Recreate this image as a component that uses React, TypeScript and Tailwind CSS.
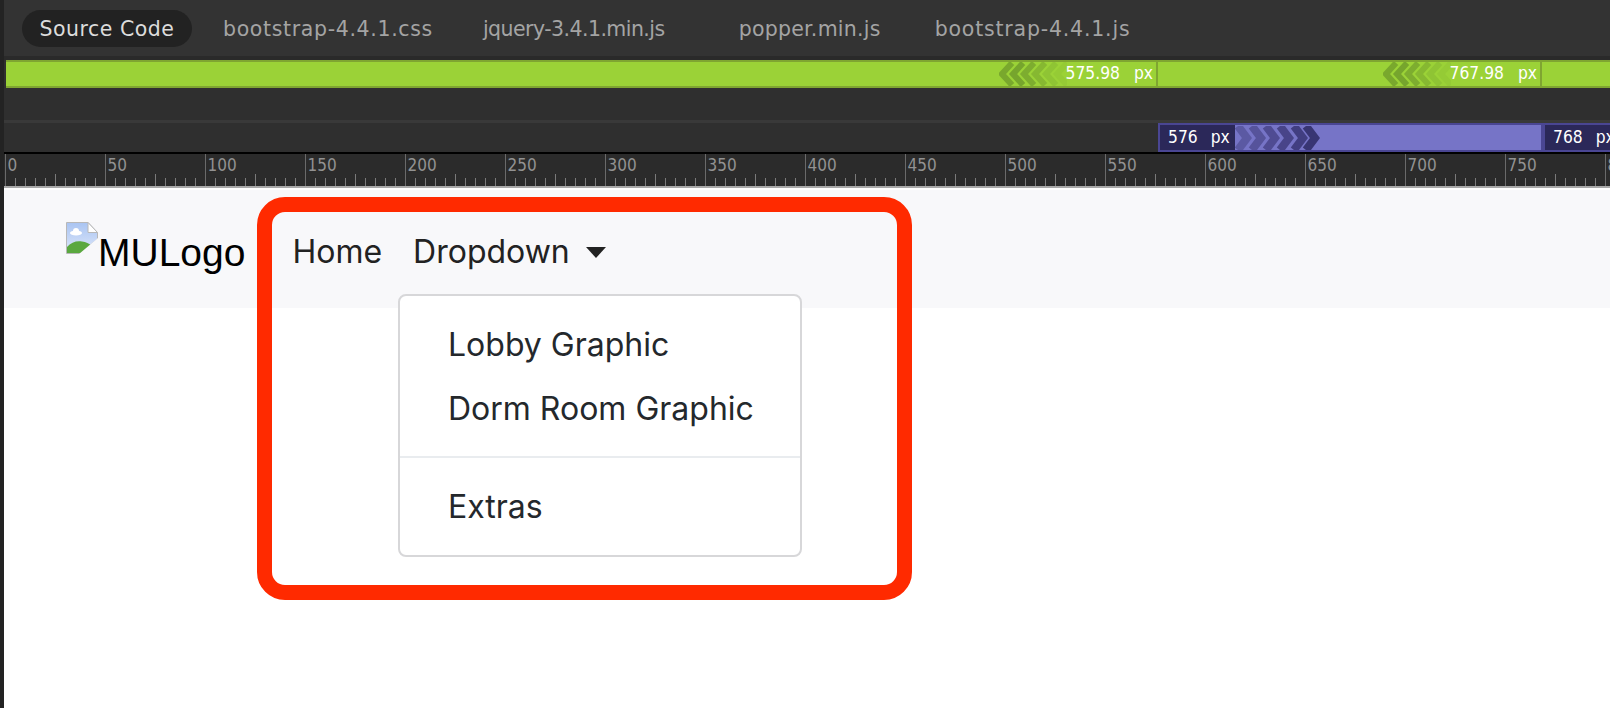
const ticks = Array.from({ length: 161 }, (_, i) => i * 5);

function Ruler() {
  return (
    <svg width="1606" height="32" className="block">
      {ticks.map((t) => {
        const x = 1.5 + t * 2;
        const top = t % 50 === 0 ? 0 : t % 25 === 0 ? 20 : 24;
        return <line key={t} x1={x} x2={x} y1={top} y2={32} stroke={t % 50 === 0 ? "#6a6a6a" : "#7a7a7a"} strokeWidth="1" />;
      })}
      {ticks
        .filter((t) => t % 50 === 0)
        .map((t) => (
          <text key={t} x={3.5 + t * 2} y={17} fill="#929292" fontSize="17" style={{ fontFamily: "'DejaVu Sans', sans-serif", fontStretch: "condensed" }}>
            {t}
          </text>
        ))}
    </svg>
  );
}

function LeftChevrons() {
  const xs = [0, 11, 22, 33, 44, 55];
  return (
    <svg width="68" height="24" className="-mr-[2px] block shrink-0">
      {xs.map((x, i) => (
        <polyline key={x} points={`${x + 13},1 ${x + 3},12 ${x + 13},23`} fill="none" stroke="#6d9a2b" strokeWidth="6" opacity={[0.75, 0.8, 0.65, 0.45, 0.25, 0.12][i]} />
      ))}
    </svg>
  );
}

function RightChevrons() {
  const xs = [0, 14, 28, 42, 56, 68];
  return (
    <svg width="86" height="24" className="block shrink-0">
      {xs.map((x, i) => (
        <polyline key={x} points={`${x + 3},0 ${x + 12},12 ${x + 3},24`} fill="none" stroke="#35316f" strokeWidth="8" opacity={[0.4, 0.5, 0.6, 0.7, 0.8, 0.95][i]} />
      ))}
    </svg>
  );
}

function BrokenImage() {
  return (
    <svg width="32" height="32" viewBox="0 0 32 32" className="block shrink-0">
      <defs>
        <linearGradient id="sky" x1="0" y1="0" x2="0" y2="1">
          <stop offset="0" stopColor="#a9c4f2" />
          <stop offset="1" stopColor="#dfe8fa" />
        </linearGradient>
      </defs>
      <path d="M0.5 0.5H22L31.5 10.5V17L14 31.5H0.5Z" fill="url(#sky)" stroke="#b8b8b8" />
      <path d="M22 0.5V10.5H31.5Z" fill="#fff" stroke="#b8b8b8" />
      <ellipse cx="10" cy="11" rx="6" ry="2.5" fill="#fff" />
      <ellipse cx="10" cy="9" rx="3" ry="3" fill="#fff" />
      <path d="M1 31V25C5 20 11 18.5 16 19.5C20 20 23 21.5 26 24L18 31Z" fill="#5aa83f" />
      <path d="M13 32L32 16V20L18 32Z" fill="#f8f8fa" />
      <path d="M20 32L32 22V32Z" fill="#f8f8fa" />
    </svg>
  );
}

export default function App() {
  return (
    <div className="relative flex h-[708px] w-[1610px] overflow-hidden bg-white font-['Inter',sans-serif]">
      <div className="w-1 shrink-0 bg-[#232323]" />

      <div className="flex min-w-0 flex-1 flex-col">
        {/* devtools tabs */}
        <div className="flex h-[56px] items-center bg-[#333333] pl-[18px] font-['DejaVu_Sans',sans-serif] text-[20.5px] tracking-[0.65px] text-[#a4a4a4]">
          <div className="flex h-[37px] w-[170px] items-center justify-center rounded-full bg-[#222222] pt-[3px] tracking-[0.5px] text-[#dcdcdc]">Source Code</div>
          <span className="ml-[31px] pt-[3px]">bootstrap-4.4.1.css</span>
          <span className="ml-[50px] pt-[3px] tracking-[-0.55px]">jquery-3.4.1.min.js</span>
          <span className="ml-[74px] pt-[3px] tracking-[0.25px]">popper.min.js</span>
          <span className="ml-[54px] pt-[3px] tracking-[0.8px]">bootstrap-4.4.1.js</span>
        </div>

        <div className="h-1 bg-[#2a2a2a]" />

        {/* max-width media query bar */}
        <div className="bg-[#2f2f2f] pl-[2px]">
          <div className="flex h-[28px] border-y-2 border-[#7fa531] bg-[#9bd237] font-['DejaVu_Sans',sans-serif] text-[17.3px] text-white [font-stretch:condensed]">
            <div className="flex w-[1152px] items-center justify-end gap-[1px] border-r-2 border-[#7fa531] pr-[3px]">
              <LeftChevrons />
              <span>575.98</span>
              <span className="ml-[13px]">px</span>
            </div>
            <div className="flex w-[384px] items-center justify-end gap-[1px] border-r-2 border-[#7fa531] pr-[3px]">
              <LeftChevrons />
              <span>767.98</span>
              <span className="ml-[13px]">px</span>
            </div>
            <div className="flex-1" />
          </div>
        </div>

        <div className="h-[32px] bg-[#2f2f2f]" />
        <div className="h-[3px] bg-[#393939]" />

        {/* min-width media query bar */}
        <div className="flex h-[29px] bg-[#2f2f2f] font-['DejaVu_Sans',sans-serif] text-[17.3px] text-white [font-stretch:condensed]">
          <div className="w-[1154px] shrink-0" />
          <div className="flex w-[385px] shrink-0 border-2 border-[#4a4693] bg-[#7674c7]">
            <div className="flex w-[75px] shrink-0 items-center bg-[#2b2859] pl-[8px]">
              <span>576</span>
              <span className="ml-[13px]">px</span>
            </div>
            <div className="flex items-center">
              <RightChevrons />
            </div>
          </div>
          <div className="flex flex-1 items-center border-y-2 border-l-2 border-[#4a4693] bg-[#2b2859] pl-[8px]">
            <span>768</span>
            <span className="ml-[13px]">px</span>
          </div>
        </div>

        <div className="h-[2px] bg-black" />

        <div className="h-[32px] overflow-hidden bg-[#2b2b2b]">
          <Ruler />
        </div>
        <div className="h-[2px] bg-[#a9a9a9]" />
        <div className="h-[2px] bg-white" />

        {/* bootstrap navbar */}
        <nav className="flex h-[118px] items-start bg-[#f8f8fa] pl-[62px] pt-[32px] text-[32px]">
          <div className="flex items-start font-['Liberation_Sans',sans-serif] text-[39px] leading-[46px] text-black">
            <BrokenImage />
            <span className="mt-[8px]">MULogo</span>
          </div>
          <div className="ml-[47px] mt-[6px] flex h-12 items-center text-[#222]">
            <a>Home</a>
            <a className="ml-[31px]">Dropdown</a>
            <span className="ml-[16px] h-0 w-0 border-x-[10px] border-t-[11px] border-x-transparent border-t-[#222]" />
          </div>
        </nav>
      </div>

      {/* open dropdown menu */}
      <div className="absolute left-[398px] top-[294px] w-[404px] rounded-lg border-2 border-[#d7d7d9] bg-white pb-4 pt-[17px] text-[32px] text-[#24282c]">
        <div className="flex h-16 items-center pl-12">Lobby Graphic</div>
        <div className="flex h-16 items-center pl-12">Dorm Room Graphic</div>
        <div className="mb-[17px] mt-[15px] h-[2px] bg-[#e9ecef]" />
        <div className="flex h-16 items-center pl-12">Extras</div>
      </div>

      {/* red annotation box */}
      <div className="absolute left-[257px] top-[197px] h-[403px] w-[655px] rounded-[28px] border-[15px] border-[#ff2a00]" />
    </div>
  );
}
